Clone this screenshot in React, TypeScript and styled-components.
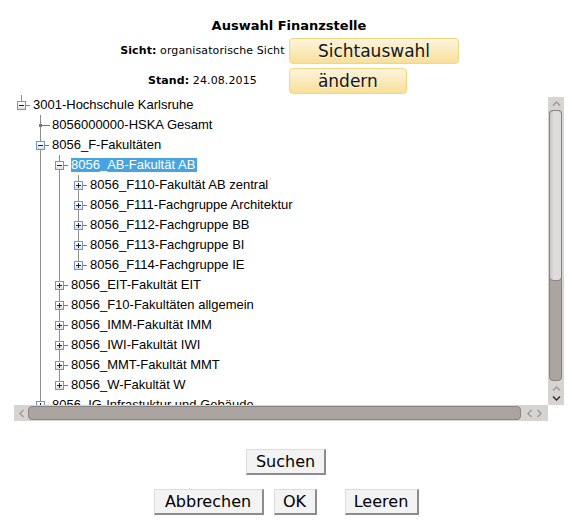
import React from 'react';
import styled, { createGlobalStyle, css } from 'styled-components';

const GlobalStyle = createGlobalStyle`
  html, body { padding: 0; background: #fff; }
  body { margin: 8px; font-family: "DejaVu Sans", sans-serif; color: #000; }
  * { box-sizing: border-box; }
`;

const Page = styled.div`
  display: flex;
  flex-direction: column;
  padding-top: 10px;
`;

const Header = styled.div`
  margin-left: 6px;
  display: flex;
  flex-direction: column;
`;

const Title = styled.h1`
  margin: 0;
  text-align: center;
  font: bold 13px/15px "DejaVu Sans", sans-serif;
`;

const InfoGrid = styled.div`
  margin-top: 5px;
  display: grid;
  grid-template-columns: 167px auto;
  justify-content: center;
  column-gap: 3px;
  row-gap: 4px;
`;

const InfoLabel = styled.div`
  align-self: center;
  text-align: center;
  font: 11px/14px "DejaVu Sans", sans-serif;
  letter-spacing: 0.1px;
  white-space: nowrap;
  b { font-weight: bold; }
`;

const YellowButton = styled.button`
  justify-self: start;
  height: 26px;
  padding: 0 28px;
  border: 1px solid #f4d67c;
  border-radius: 4px;
  background: linear-gradient(to bottom, #fbf4e0 0%, #fae9b8 55%, #f9df98 100%);
  font: 17px/24px "DejaVu Sans", sans-serif;
  color: #141414;
  text-shadow: 0 1px 0 rgba(255, 255, 255, 0.8);
`;

const TreeFrame = styled.div`
  margin: 1px 0 0 6px;
  width: 550px;
  display: grid;
  grid-template-columns: 534px 16px;
  grid-template-rows: 310px 16px;
`;

const TreeViewport = styled.div`
  overflow: hidden;
  position: relative;
`;

const Row = styled.div`
  display: flex;
  height: 20px;
  align-items: center;
  white-space: nowrap;
`;

const Cell = styled.div<{ $line?: boolean }>`
  position: relative;
  flex: none;
  width: 19px;
  height: 20px;
  ${p => p.$line && css`
    &::before {
      content: '';
      position: absolute;
      left: 7px;
      top: 0;
      bottom: 0;
      width: 1px;
      background: #8e8e8e;
    }
  `}
`;

const VLine = styled.span<{ $top: number; $bottom: number }>`
  position: absolute;
  left: 7px;
  width: 1px;
  top: ${p => p.$top}px;
  bottom: ${p => p.$bottom}px;
  background: #8e8e8e;
`;

const HLine = styled.span<{ $left: number; $width: number }>`
  position: absolute;
  top: 10px;
  height: 1px;
  left: ${p => p.$left}px;
  width: ${p => p.$width}px;
  background: #7a7a7a;
`;

const LeafDot = styled.span`
  position: absolute;
  left: 6px;
  top: 9px;
  width: 3px;
  height: 3px;
  background: #777;
`;

const Expander = styled.span<{ $open: boolean }>`
  position: absolute;
  left: 3px;
  top: 6px;
  width: 9px;
  height: 9px;
  border: 1px solid #7392c6;
  background: linear-gradient(to bottom, #ffffff 0%, #f1f3f7 50%, #d9dee8 100%);
  &::before {
    content: '';
    position: absolute;
    left: 1px;
    top: 3px;
    width: 5px;
    height: 1px;
    background: #222;
  }
  ${p => !p.$open && css`
    &::after {
      content: '';
      position: absolute;
      left: 3px;
      top: 1px;
      width: 1px;
      height: 5px;
      background: #222;
    }
  `}
`;

const Label = styled.span<{ $selected?: boolean }>`
  font: 13px/14px "Liberation Sans", Arial, sans-serif;
  padding: 0 2px 0 0;
  color: ${p => (p.$selected ? '#fff' : '#000')};
  background: ${p => (p.$selected ? '#47a4e0' : 'transparent')};
`;

const VScroll = styled.div`
  margin-top: 2px;
  background: #d7d3d1;
  display: flex;
  flex-direction: column;
  align-items: stretch;
`;

const ArrowBox = styled.div<{ $h: number }>`
  height: ${p => p.$h}px;
  display: flex;
  flex-direction: column;
  align-items: center;
  justify-content: center;
  gap: 5px;
  flex: none;
`;

const VTrack = styled.div`
  flex: 1;
  margin: 0 2px 0 1px;
  background: #aca4a1;
  border: 1px solid #8a8380;
  border-radius: 4px;
  display: flex;
  flex-direction: column;
`;

const VThumb = styled.div`
  height: 171px;
  margin: -1px;
  border: 1px solid #8a8581;
  border-radius: 4px;
  background: linear-gradient(to right, #c9c6c4 0%, #e0dedc 40%, #dddbd9 100%);
`;

const HScroll = styled.div`
  background: #d7d3d1;
  display: flex;
  align-items: center;
`;

const HArrowBox = styled.div<{ $w: number }>`
  width: ${p => p.$w}px;
  height: 16px;
  flex: none;
  display: flex;
  align-items: center;
  justify-content: center;
  gap: 5px;
`;

const HTrack = styled.div`
  flex: 1;
  height: 14px;
  background: #aca4a1;
  border: 1px solid #8a8380;
  border-radius: 4px;
`;

const Corner = styled.div`
  background: #fff;
`;

const ButtonRow = styled.div<{ $mt: number }>`
  margin-top: ${p => p.$mt}px;
  display: flex;
  justify-content: center;
  gap: 10px;
`;

const PlainButton = styled.button<{ $w: number; $ml?: number }>`
  width: ${p => p.$w}px;
  margin-left: ${p => p.$ml ?? 0}px;
  height: 26px;
  padding: 0;
  background: #f3f3f3;
  border-style: solid;
  border-width: 1px 2px 2px 1px;
  border-color: #dcdcdc #8c8c8c #8c8c8c #dcdcdc;
  font: 16px/22px "DejaVu Sans", sans-serif;
  color: #000;
`;

type Dir = 'up' | 'down' | 'left' | 'right';

const Chevron: React.FC<{ dir: Dir; color?: string }> = ({ dir, color = '#9b9896' }) => {
  const horiz = dir === 'left' || dir === 'right';
  const w = horiz ? 5 : 9;
  const h = horiz ? 9 : 5;
  const pts =
    dir === 'up' ? '1,4.5 4.5,1 8,4.5'
    : dir === 'down' ? '1,0.5 4.5,4 8,0.5'
    : dir === 'left' ? '4.5,1 1,4.5 4.5,8'
    : '0.5,1 4,4.5 0.5,8';
  return (
    <svg width={w} height={h} viewBox={`0 0 ${w} ${h}`} style={{ display: 'block' }}>
      <polyline points={pts} fill="none" stroke={color} strokeWidth={1.4} />
    </svg>
  );
};

type Node = {
  label: string;
  level: number;
  kind: 'open' | 'closed' | 'leaf';
  last: boolean;
  ancestors: boolean[];
  selected?: boolean;
};

const nodes: Node[] = [
  { label: '3001-Hochschule Karlsruhe', level: 0, kind: 'open', last: true, ancestors: [] },
  { label: '8056000000-HSKA Gesamt', level: 1, kind: 'leaf', last: false, ancestors: [false] },
  { label: '8056_F-Fakultäten', level: 1, kind: 'open', last: false, ancestors: [false] },
  { label: '8056_AB-Fakultät AB', level: 2, kind: 'open', last: false, ancestors: [false, true], selected: true },
  { label: '8056_F110-Fakultät AB zentral', level: 3, kind: 'closed', last: false, ancestors: [false, true, true] },
  { label: '8056_F111-Fachgruppe Architektur', level: 3, kind: 'closed', last: false, ancestors: [false, true, true] },
  { label: '8056_F112-Fachgruppe BB', level: 3, kind: 'closed', last: false, ancestors: [false, true, true] },
  { label: '8056_F113-Fachgruppe BI', level: 3, kind: 'closed', last: false, ancestors: [false, true, true] },
  { label: '8056_F114-Fachgruppe IE', level: 3, kind: 'closed', last: true, ancestors: [false, true, true] },
  { label: '8056_EIT-Fakultät EIT', level: 2, kind: 'closed', last: false, ancestors: [false, true] },
  { label: '8056_F10-Fakultäten allgemein', level: 2, kind: 'closed', last: false, ancestors: [false, true] },
  { label: '8056_IMM-Fakultät IMM', level: 2, kind: 'closed', last: false, ancestors: [false, true] },
  { label: '8056_IWI-Fakultät IWI', level: 2, kind: 'closed', last: false, ancestors: [false, true] },
  { label: '8056_MMT-Fakultät MMT', level: 2, kind: 'closed', last: false, ancestors: [false, true] },
  { label: '8056_W-Fakultät W', level: 2, kind: 'closed', last: true, ancestors: [false, true] },
  { label: '8056_IG-Infrastuktur und Gebäude', level: 1, kind: 'closed', last: false, ancestors: [false] },
];

const TreeRow: React.FC<{ node: Node }> = ({ node }) => (
  <Row>
    {node.ancestors.map((a, i) => (
      <Cell key={i} $line={a} />
    ))}
    <Cell>
      <VLine $top={0} $bottom={node.last ? 10 : 0} />
      {node.kind === 'leaf' ? (
        <>
          <HLine $left={7} $width={10} />
          <LeafDot />
        </>
      ) : (
        <>
          <HLine $left={12} $width={4} />
          <Expander $open={node.kind === 'open'} />
        </>
      )}
    </Cell>
    <Label $selected={node.selected}>{node.label}</Label>
  </Row>
);

export default function App() {
  return (
    <>
      <GlobalStyle />
      <Page>
        <Header>
          <Title>Auswahl Finanzstelle</Title>
          <InfoGrid>
            <InfoLabel>
              <b>Sicht:</b> organisatorische Sicht
            </InfoLabel>
            <YellowButton>Sichtauswahl</YellowButton>
            <InfoLabel>
              <b>Stand:</b> 24.08.2015
            </InfoLabel>
            <YellowButton>ändern</YellowButton>
          </InfoGrid>
        </Header>

        <TreeFrame>
          <TreeViewport>
            {nodes.map((n, i) => (
              <TreeRow key={i} node={n} />
            ))}
          </TreeViewport>
          <VScroll>
            <ArrowBox $h={13}>
              <Chevron dir="up" />
            </ArrowBox>
            <VTrack>
              <VThumb />
            </VTrack>
            <ArrowBox $h={24}>
              <Chevron dir="up" />
              <Chevron dir="down" color="#2a2a2a" />
            </ArrowBox>
          </VScroll>
          <HScroll>
            <HArrowBox $w={14}>
              <Chevron dir="left" />
            </HArrowBox>
            <HTrack />
            <HArrowBox $w={27}>
              <Chevron dir="left" />
              <Chevron dir="right" />
            </HArrowBox>
          </HScroll>
          <Corner />
        </TreeFrame>

        <ButtonRow $mt={28}>
          <PlainButton $w={80}>Suchen</PlainButton>
        </ButtonRow>
        <ButtonRow $mt={14}>
          <PlainButton $w={110}>Abbrechen</PlainButton>
          <PlainButton $w={43}>OK</PlainButton>
          <PlainButton $w={74} $ml={18}>Leeren</PlainButton>
        </ButtonRow>
      </Page>
    </>
  );
}
